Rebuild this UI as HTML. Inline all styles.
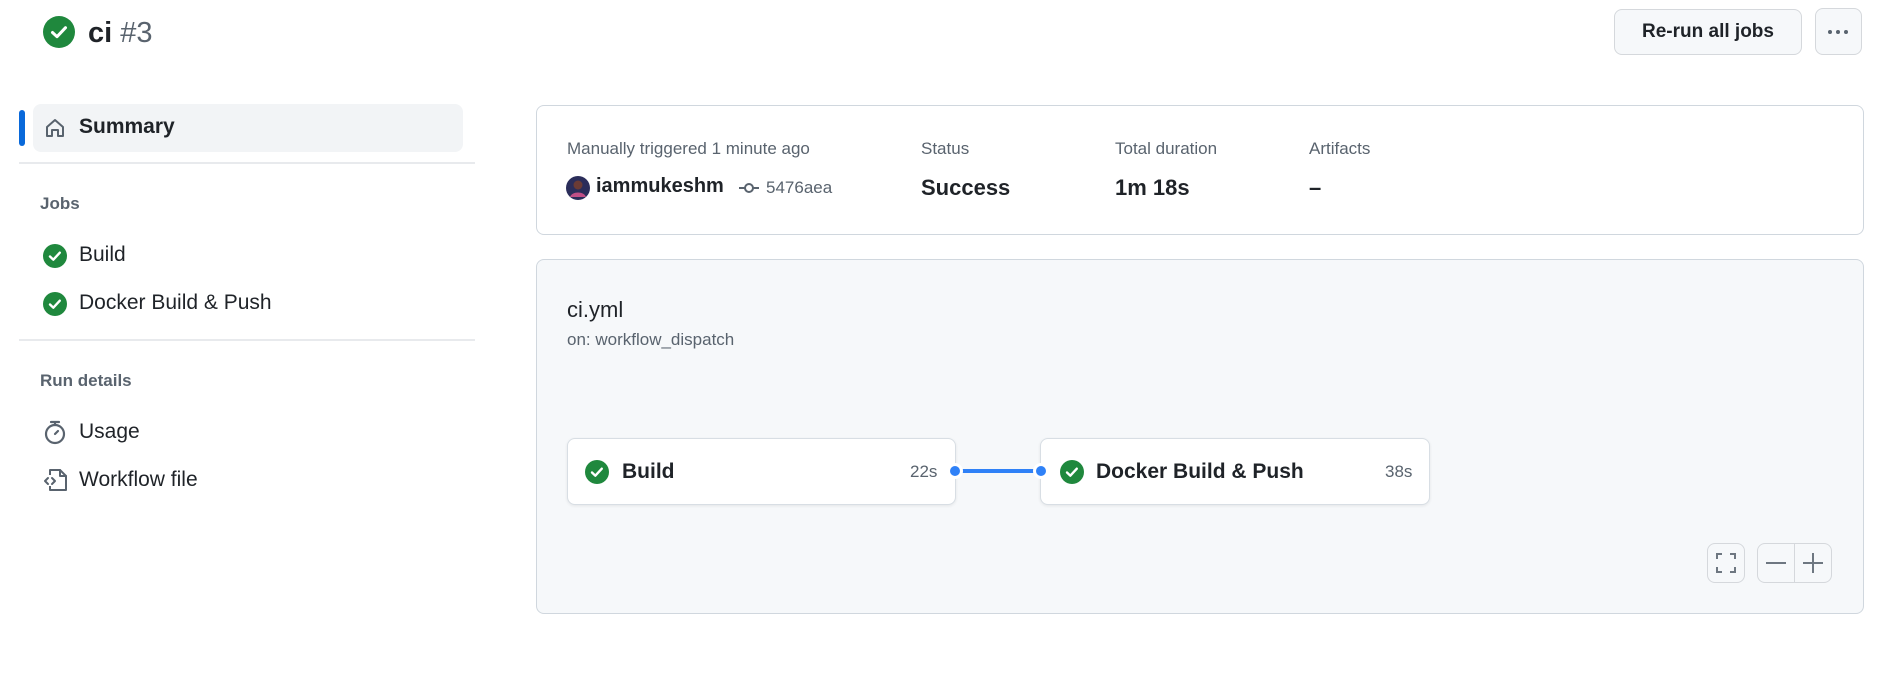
<!DOCTYPE html>
<html><head><meta charset="utf-8"><style>
*{box-sizing:border-box;margin:0;padding:0}
body{width:1879px;height:677px;background:#fff;font-family:"Liberation Sans",sans-serif;color:#1f2328;position:relative;overflow:hidden}
.a{position:absolute;white-space:nowrap}
.btn{position:absolute;border:1px solid #d5d8dc;border-radius:8px;background:#f6f8fa}
.card{position:absolute;border:1px solid #d0d7de;border-radius:8px}
.node{position:absolute;background:#fff;border:1px solid #d8dee4;border-radius:8px;box-shadow:0 1px 3px rgba(0,0,0,.08)}
.g{color:#59636e}
</style></head><body>
<svg class="a" style="left:43px;top:16px" width="32" height="32" viewBox="0 0 32 32"><circle cx="16" cy="16" r="16" fill="#1f883d"/><path d="M9.5 16.5l4.5 4.2 8.5-9" stroke="#fff" stroke-width="3" fill="none" stroke-linecap="round" stroke-linejoin="round"/></svg>
<div class="a" style="left:88px;top:17px;font-size:29px;font-weight:bold">ci <span style="font-weight:normal;color:#59636e">#3</span></div>
<div class="btn" style="left:1614px;top:9px;width:188px;height:46px;font-size:19px;font-weight:bold;text-align:center;line-height:44px">Re-run all jobs</div>
<div class="btn" style="left:1815px;top:8px;width:47px;height:47px"></div>
<div class="a" style="left:1828px;top:30px;width:4px;height:4px;border-radius:2px;background:#59636e"></div>
<div class="a" style="left:1836px;top:30px;width:4px;height:4px;border-radius:2px;background:#59636e"></div>
<div class="a" style="left:1844px;top:30px;width:4px;height:4px;border-radius:2px;background:#59636e"></div>

<div class="a" style="left:19px;top:110px;width:6px;height:36px;background:#0969da;border-radius:3px"></div>
<div class="a" style="left:33px;top:104px;width:430px;height:48px;background:#f2f4f6;border-radius:8px"></div>
<svg class="a" style="left:43px;top:116px" width="24" height="24" viewBox="0 0 24 24"><path d="M4 11l8-7 8 7v9h-5v-6h-6v6H4z" fill="none" stroke="#59636e" stroke-width="2" stroke-linejoin="round"/></svg>
<div class="a" style="left:79px;top:115px;font-size:21px;font-weight:bold">Summary</div>
<div class="a" style="left:19px;top:162px;width:456px;height:2px;background:#e8eaed"></div>
<div class="a g" style="left:40px;top:194px;font-size:17px;font-weight:bold">Jobs</div>
<svg class="a" style="left:43px;top:244px" width="24" height="24" viewBox="0 0 24 24"><circle cx="12" cy="12" r="12" fill="#1f883d"/><path d="M7 12.5l3.3 3.2 6.5-7" stroke="#fff" stroke-width="2.4" fill="none" stroke-linecap="round" stroke-linejoin="round"/></svg>
<div class="a" style="left:79px;top:243px;font-size:21px">Build</div>
<svg class="a" style="left:43px;top:292px" width="24" height="24" viewBox="0 0 24 24"><circle cx="12" cy="12" r="12" fill="#1f883d"/><path d="M7 12.5l3.3 3.2 6.5-7" stroke="#fff" stroke-width="2.4" fill="none" stroke-linecap="round" stroke-linejoin="round"/></svg>
<div class="a" style="left:79px;top:291px;font-size:21px">Docker Build &amp; Push</div>
<div class="a" style="left:19px;top:339px;width:456px;height:2px;background:#e8eaed"></div>
<div class="a g" style="left:40px;top:371px;font-size:17px;font-weight:bold">Run details</div>
<svg class="a" style="left:43px;top:419px" width="24" height="26" viewBox="0 0 24 26"><circle cx="12" cy="15" r="9" fill="none" stroke="#59636e" stroke-width="2.2"/><path d="M8 3h8M12 3v3M12 15l3-3" stroke="#59636e" stroke-width="2.2" stroke-linecap="round"/></svg>
<div class="a" style="left:79px;top:420px;font-size:21px">Usage</div>
<svg class="a" style="left:42px;top:467px" width="26" height="26" viewBox="0 0 26 26"><path d="M8 8V3h10l6 6v14H8v-4" fill="none" stroke="#59636e" stroke-width="2" stroke-linejoin="round"/><path d="M18 3v6h6M6 11l-3 3 3 3M10 11l3 3-3 3" fill="none" stroke="#59636e" stroke-width="2" stroke-linejoin="round" stroke-linecap="round"/></svg>
<div class="a" style="left:79px;top:468px;font-size:21px">Workflow file</div>

<div class="card" style="left:536px;top:105px;width:1328px;height:130px;background:#fff"></div>
<div class="a g" style="left:567px;top:139px;font-size:17px">Manually triggered 1 minute ago</div>
<div class="a g" style="left:921px;top:139px;font-size:17px">Status</div>
<div class="a g" style="left:1115px;top:139px;font-size:17px">Total duration</div>
<div class="a g" style="left:1309px;top:139px;font-size:17px">Artifacts</div>
<svg class="a" style="left:566px;top:176px" width="24" height="24" viewBox="0 0 24 24"><circle cx="12" cy="12" r="12" fill="#2b2d5a"/><circle cx="12" cy="9" r="4.5" fill="#6b3b35"/><path d="M4 21c2-6 14-6 16 0" fill="#c04f86"/></svg>
<div class="a" style="left:596px;top:175px;font-size:20px;font-weight:bold">iammukeshm</div>
<svg class="a" style="left:738px;top:181px" width="22" height="14" viewBox="0 0 22 14"><circle cx="11" cy="7" r="4" fill="none" stroke="#59636e" stroke-width="2"/><path d="M1 7h6M15 7h6" stroke="#59636e" stroke-width="2"/></svg>
<div class="a g" style="left:766px;top:178px;font-size:17px">5476aea</div>
<div class="a" style="left:921px;top:175px;font-size:22px;font-weight:bold">Success</div>
<div class="a" style="left:1115px;top:175px;font-size:22px;font-weight:bold">1m 18s</div>
<div class="a" style="left:1309px;top:175px;font-size:22px;font-weight:bold">–</div>

<div class="card" style="left:536px;top:259px;width:1328px;height:355px;background:#f6f8fa"></div>
<div class="a" style="left:567px;top:297px;font-size:22px">ci.yml</div>
<div class="a g" style="left:567px;top:330px;font-size:17px">on: workflow_dispatch</div>
<div class="node" style="left:567px;top:438px;width:389px;height:67px"></div>
<svg class="a" style="left:585px;top:460px" width="24" height="24" viewBox="0 0 24 24"><circle cx="12" cy="12" r="12" fill="#1f883d"/><path d="M7 12.5l3.3 3.2 6.5-7" stroke="#fff" stroke-width="2.4" fill="none" stroke-linecap="round" stroke-linejoin="round"/></svg>
<div class="a" style="left:622px;top:460px;font-size:21px;font-weight:bold">Build</div>
<div class="a g" style="left:910px;top:462px;font-size:17px">22s</div>
<div class="node" style="left:1040px;top:438px;width:390px;height:67px"></div>
<svg class="a" style="left:1060px;top:460px" width="24" height="24" viewBox="0 0 24 24"><circle cx="12" cy="12" r="12" fill="#1f883d"/><path d="M7 12.5l3.3 3.2 6.5-7" stroke="#fff" stroke-width="2.4" fill="none" stroke-linecap="round" stroke-linejoin="round"/></svg>
<div class="a" style="left:1096px;top:460px;font-size:21px;font-weight:bold">Docker Build &amp; Push</div>
<div class="a g" style="left:1385px;top:462px;font-size:17px">38s</div>
<div class="a" style="left:956px;top:469px;width:84px;height:4px;background:#2f81f7"></div>
<div class="a" style="left:947px;top:463px;width:16px;height:16px;border-radius:50%;background:#2f81f7;border:3px solid #fff"></div>
<div class="a" style="left:1033px;top:463px;width:16px;height:16px;border-radius:50%;background:#2f81f7;border:3px solid #fff"></div>
<div class="btn" style="left:1707px;top:543px;width:38px;height:40px"></div>
<svg class="a" style="left:1714px;top:551px" width="24" height="24" viewBox="0 0 24 24"><path d="M3 8V3h5M16 3h5v5M21 16v5h-5M8 21H3v-5" fill="none" stroke="#6e7781" stroke-width="2"/></svg>
<div class="btn" style="left:1757px;top:543px;width:75px;height:40px"></div>
<div class="a" style="left:1794px;top:544px;width:1px;height:38px;background:#d5d8dc"></div>
<div class="a" style="left:1766px;top:562px;width:20px;height:2px;background:#6e7781"></div>
<div class="a" style="left:1803px;top:562px;width:20px;height:2px;background:#6e7781"></div>
<div class="a" style="left:1812px;top:553px;width:2px;height:20px;background:#6e7781"></div>
</body></html>
